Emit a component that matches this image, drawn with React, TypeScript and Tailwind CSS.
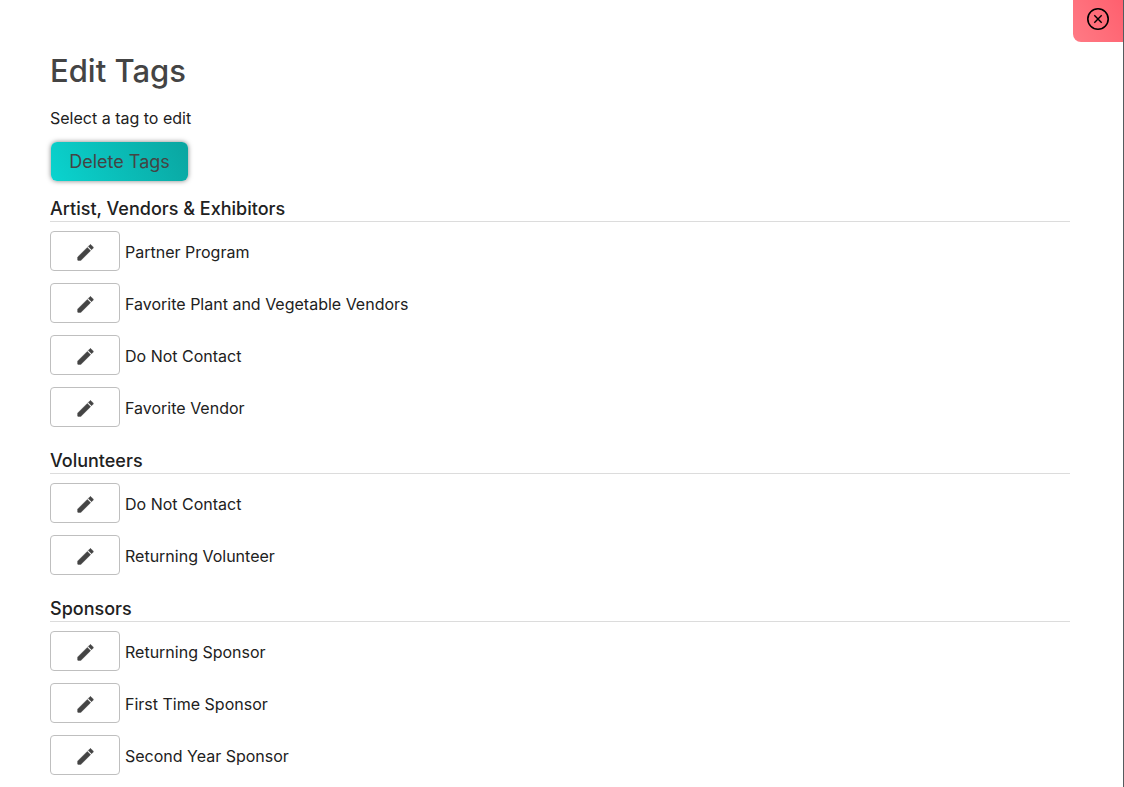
import React, { useState } from "react";

const TAG_GROUPS = [
  {
    title: "Artist, Vendors & Exhibitors",
    tags: [
      "Partner Program",
      "Favorite Plant and Vegetable Vendors",
      "Do Not Contact",
      "Favorite Vendor",
    ],
  },
  {
    title: "Volunteers",
    tags: ["Do Not Contact", "Returning Volunteer"],
  },
  {
    title: "Sponsors",
    tags: ["Returning Sponsor", "First Time Sponsor", "Second Year Sponsor"],
  },
];

const PencilIcon = () => (
  <svg
    viewBox="0 0 24 24"
    fill="currentColor"
    stroke="currentColor"
    strokeWidth="0.5"
    aria-hidden="true"
    className="size-[21px]"
  >
    <path d="M3 17.46v3.04c0 .28.22.5.5.5h3.04c.13 0 .26-.05.35-.15L17.81 9.94l-3.75-3.75L3.15 17.1c-.1.1-.15.22-.15.36zM20.71 7.04c.39-.39.39-1.02 0-1.41l-2.34-2.34c-.39-.39-1.02-.39-1.41 0l-1.83 1.83 3.75 3.75 1.83-1.83z" />
  </svg>
);

const CloseIcon = () => (
  <svg
    viewBox="0 0 24 24"
    fill="none"
    stroke="currentColor"
    strokeWidth="1.6"
    aria-hidden="true"
    className="size-6"
  >
    <circle cx="12" cy="12" r="10.2" />
    <path d="M8.3 8.3l7.4 7.4M15.7 8.3l-7.4 7.4" strokeWidth="1.4" />
  </svg>
);

const TagRow = ({ name, onEdit }: { name: string; onEdit: () => void }) => (
  <li className="flex items-center gap-[5px]">
    <button
      type="button"
      aria-label={`Edit ${name}`}
      onClick={onEdit}
      className="flex h-10 w-[70px] shrink-0 items-center justify-center rounded border border-[#bfbfbf] bg-white pt-0.5 text-[#444] hover:bg-gray-50"
    >
      <PencilIcon />
    </button>
    <span className="pt-px">{name}</span>
  </li>
);

const App = () => {
  const [open, setOpen] = useState(true);
  const [, setEditing] = useState<string | null>(null);

  if (!open) return null;

  return (
    <main className="relative min-h-screen border-r border-[#555b5e] bg-white pt-[50px] pr-[53px] pl-[50px] font-[Inter,sans-serif] text-base leading-6 text-[#212121]">
      <button
        type="button"
        aria-label="Close"
        onClick={() => setOpen(false)}
        className="absolute top-0 right-0 flex h-[42px] w-[50px] items-center justify-center rounded-bl-lg bg-linear-60 from-[#ff7a85] to-[#ff5f6e] pb-1 text-black"
      >
        <CloseIcon />
      </button>

      <h1 className="text-[31px] leading-[42px] font-medium text-[#444]">
        Edit Tags
      </h1>
      <p className="mt-[14px]">Select a tag to edit</p>
      <button
        type="button"
        className="mt-3 ml-px flex h-[39px] w-[137px] items-center justify-center rounded-md bg-linear-60 from-[#0ad4cf] to-[#0aa5a0] text-lg text-[#444] shadow-[0_0_5px_rgba(0,0,0,0.5)]"
      >
        Delete Tags
      </button>

      <div className="mt-4 flex flex-col gap-[22px]">
        {TAG_GROUPS.map((group) => (
          <section key={group.title}>
            <h2 className="border-b border-[#dcdcdc] text-lg leading-6 font-medium">
              {group.title}
            </h2>
            <ul className="mt-[9px] flex flex-col gap-3">
              {group.tags.map((tag) => (
                <TagRow
                  key={tag}
                  name={tag}
                  onEdit={() => setEditing(`${group.title}/${tag}`)}
                />
              ))}
            </ul>
          </section>
        ))}
      </div>
    </main>
  );
};

export default App;
